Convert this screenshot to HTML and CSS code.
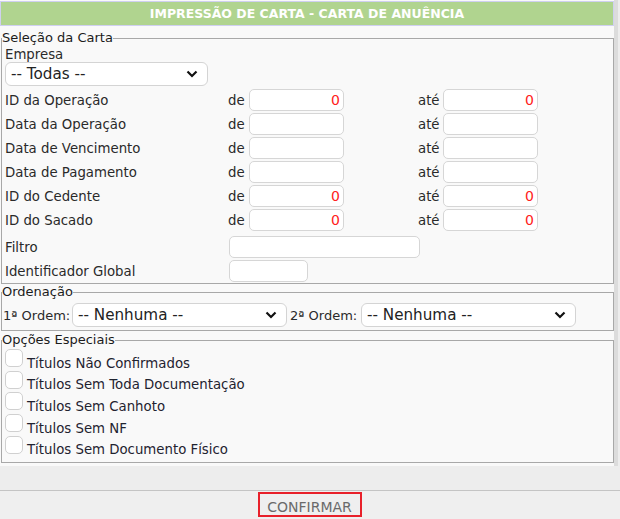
FILE: index.html
```html
<!DOCTYPE html>
<html lang="pt-BR">
<head>
<meta charset="utf-8">
<title>Impressão de Carta</title>
<link rel="stylesheet" href="styles.css">
</head>
<body>
<div class="panel">
  <div class="title">IMPRESSÃO DE CARTA - CARTA DE ANUÊNCIA</div>

  <fieldset class="box sel">
    <legend>Seleção da Carta</legend>
    <div class="lbl-top">Empresa</div>
    <div class="select wide-a"><span>-- Todas --</span><svg viewBox="0 0 12 8" class="chev"><path d="M1.5 1.5 L6 6 L10.5 1.5" /></svg></div>
    <div class="grid">
      <span class="lbl">ID da Operação</span><span class="de">de</span><span class="inp num">0</span><span></span><span class="ate">até</span><span class="inp num">0</span>
      <span class="lbl">Data da Operação</span><span class="de">de</span><span class="inp"></span><span></span><span class="ate">até</span><span class="inp"></span>
      <span class="lbl">Data de Vencimento</span><span class="de">de</span><span class="inp"></span><span></span><span class="ate">até</span><span class="inp"></span>
      <span class="lbl">Data de Pagamento</span><span class="de">de</span><span class="inp"></span><span></span><span class="ate">até</span><span class="inp"></span>
      <span class="lbl">ID do Cedente</span><span class="de">de</span><span class="inp num">0</span><span></span><span class="ate">até</span><span class="inp num">0</span>
      <span class="lbl">ID do Sacado</span><span class="de">de</span><span class="inp num">0</span><span></span><span class="ate">até</span><span class="inp num">0</span>
    </div>
    <div class="row2 first"><span class="lbl2">Filtro</span><span class="inp filtro"></span></div>
    <div class="row2"><span class="lbl2">Identificador Global</span><span class="inp ident"></span></div>
  </fieldset>

  <fieldset class="box ord">
    <legend>Ordenação</legend>
    <div class="ordrow">
      <span class="olbl one">1ª Ordem:</span>
      <div class="select wide-b"><span>-- Nenhuma --</span><svg viewBox="0 0 12 8" class="chev"><path d="M1.5 1.5 L6 6 L10.5 1.5" /></svg></div>
      <span class="olbl two">2ª Ordem:</span>
      <div class="select wide-b"><span>-- Nenhuma --</span><svg viewBox="0 0 12 8" class="chev"><path d="M1.5 1.5 L6 6 L10.5 1.5" /></svg></div>
    </div>
  </fieldset>

  <fieldset class="box opt">
    <legend>Opções Especiais</legend>
    <div class="chk"><span class="cb"></span><span class="ct">Títulos Não Confirmados</span></div>
    <div class="chk"><span class="cb"></span><span class="ct">Títulos Sem Toda Documentação</span></div>
    <div class="chk"><span class="cb"></span><span class="ct">Títulos Sem Canhoto</span></div>
    <div class="chk"><span class="cb"></span><span class="ct">Títulos Sem NF</span></div>
    <div class="chk"><span class="cb"></span><span class="ct">Títulos Sem Documento Físico</span></div>
  </fieldset>
</div>
<div class="gap"></div>
<div class="footer"><span class="btn">CONFIRMAR</span></div>
</body>
</html>
```

FILE: styles.css
```css
* { box-sizing: border-box; }
html, body { margin: 0; padding: 0; }
body {
  width: 620px;
  height: 519px;
  overflow: hidden;
  background: #ededed;
  font-family: "DejaVu Sans", "Noto Sans", sans-serif;
  font-size: 13.3px;
  color: #2a2a2a;
}
.panel {
  width: 618px;
  height: 466px;
  background: #f9f9f9;
  border-right: 4px solid #dcdcdc;
  padding-top: 1px;
}
.title {
  width: 614px;
  height: 25px;
  background: #b0d48f;
  border: 1px solid #cfd0f0;
  color: #ffffff;
  font-weight: bold;
  font-size: 12.5px;
  text-align: center;
  line-height: 24px;
}
.box {
  width: 613px;
  margin: 0 0 0 1px;
  border: 1px solid #a8a8a8;
  padding: 0 0 0 3px;
}
.box legend {
  padding: 0;
  margin-left: -3px;
  font-size: 13px;
  color: #1c1c1c;
  line-height: 14px;
}
.sel { margin-top: 5px; padding-bottom: 1px; }
.lbl-top { height: 14px; line-height: 14px; margin-top: 3px; }
.select {
  height: 24px;
  background: #fff;
  border: 1px solid #d4d4d4;
  border-radius: 6px;
  display: flex;
  align-items: center;
  justify-content: space-between;
  padding: 0 9px 0 5px;
  font-size: 15.2px;
  color: #222;
}
.wide-a { width: 203px; }
.chev { width: 12px; height: 8px; fill: none; stroke: #111; stroke-width: 2.2; }
.grid {
  display: grid;
  grid-template-columns: 223px 21px 95px 74px 25px 95px;
  grid-auto-rows: 22px;
  row-gap: 2px;
  margin-top: 3px;
  align-items: center;
}
.inp {
  display: block;
  height: 22px;
  background: #fff;
  border: 1px solid #d6d6d6;
  border-radius: 5px;
}
.num {
  color: #ff2020;
  text-align: right;
  padding-right: 3px;
  font-size: 14px;
  line-height: 20px;
}
.row2 {
  display: grid;
  grid-template-columns: 224px auto;
  align-items: center;
  margin-top: 2px;
}
.row2.first { margin-top: 5px; }
.filtro { width: 191px; }
.ident { width: 79px; }
.ord { margin-top: 1px; padding-bottom: 3px; }
.ordrow { display: flex; align-items: center; margin-left: -2px; margin-top: 4px; }
.olbl { font-size: 13px; }
.olbl.one { width: 69px; }
.olbl.two { width: 71px; margin-left: 3px; }
.wide-b { width: 215px; }
.opt { margin-top: 2px; padding-bottom: 5px; }
.opt legend + .chk { margin-top: 2px; }
.chk { display: flex; height: 21.7px; }
.cb {
  width: 18px; height: 18px;
  border: 1px solid #d0d0d0;
  border-radius: 5px;
  background: #fff;
  margin-right: 4px;
  flex: none;
}
.ct { align-self: flex-end; line-height: 14px; color: #1f2330; }
.gap { height: 24px; }
.footer {
  border-top: 1px solid #c4c4c4;
  height: 29px;
  display: flex;
  justify-content: center;
  padding-top: 1px;
  background: #efefef;
}
.btn {
  width: 104px;
  height: 25px;
  border: 2px solid #e8202a;
  color: #6a6a6a;
  font-size: 14px;
  text-align: center;
  line-height: 27px;
  margin-left: -1px;
}
```
